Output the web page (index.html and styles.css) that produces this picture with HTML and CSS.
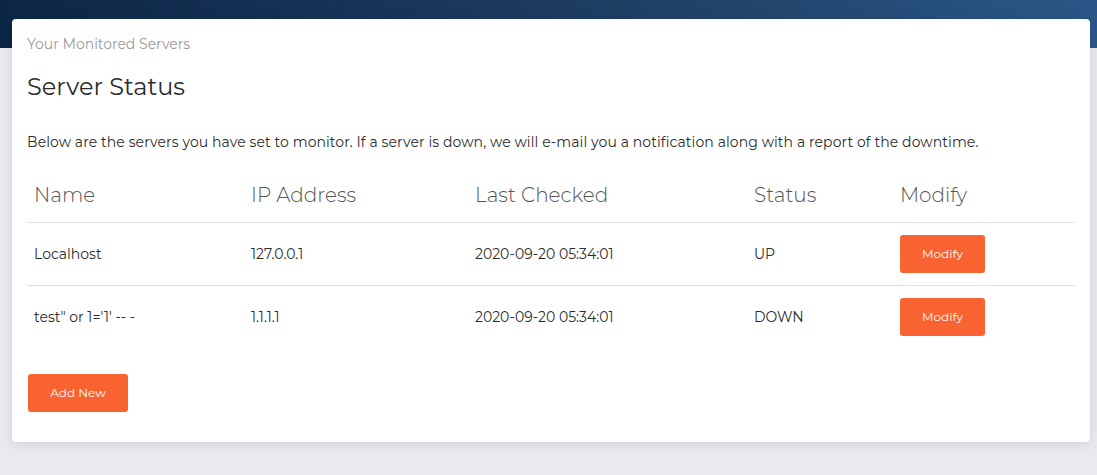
FILE: index.html
```html
<!DOCTYPE html>
<html>
<head>
<meta charset="utf-8">
<link rel="stylesheet" href="styles.css">
</head>
<body>
<div class="panel-header"></div>
<div class="content">
  <div class="card">
    <div class="card-header">
      <h5 class="card-category">Your Monitored Servers</h5>
      <h4 class="card-title">Server Status</h4>
    </div>
    <div class="card-body">
      <p class="intro">Below are the servers you have set to monitor. If a server is down, we will e-mail you a notification along with a report of the downtime.</p>
      <table class="table">
        <thead>
          <tr>
            <th class="c-name">Name</th>
            <th class="c-ip">IP Address</th>
            <th class="c-date">Last Checked</th>
            <th class="c-status">Status</th>
            <th class="c-mod">Modify</th>
          </tr>
        </thead>
        <tbody>
          <tr>
            <td>Localhost</td>
            <td>127.0.0.1</td>
            <td>2020-09-20 05:34:01</td>
            <td>UP</td>
            <td><button class="btn">Modify</button></td>
          </tr>
          <tr>
            <td>test" or 1='1' -- -</td>
            <td>1.1.1.1</td>
            <td>2020-09-20 05:34:01</td>
            <td>DOWN</td>
            <td><button class="btn">Modify</button></td>
          </tr>
        </tbody>
      </table>
      <button class="btn btn-add">Add New</button>
    </div>
  </div>
</div>
</body>
</html>
```

FILE: styles.css
```css
html, body {
  margin: 0;
  padding: 0;
}
body {
  background: #e9e9ee;
  font-family: "Montserrat", Inter, "Noto Sans", sans-serif;
  color: #2c2c2c;
  font-size: 14px;
  height: 475px;
  overflow: hidden;
}
.panel-header {
  height: 48px;
  background: linear-gradient(to right, #0c2646 0%, #204065 60%, #2a5788 100%);
}
.content {
  padding: 0 7px 0 12px;
  margin-top: -29px;
}
.card {
  background: #fff;
  border-radius: 4px;
  box-shadow: 0 2px 12px rgba(0, 0, 0, 0.1);
  height: 423px;
}
.card-header {
  padding: 15px 15px 0;
}
.card-category {
  margin: 0;
  font-size: 14px;
  font-weight: 400;
  color: #9a9a9a;
  line-height: 20px;
}
.card-title {
  margin: 18px 0 0;
  font-size: 24px;
  font-weight: 400;
  line-height: 30px;
  color: #2c2c2c;
}
.card-body {
  padding: 0 15px;
}
.intro {
  margin: 30px 0 15px;
  line-height: 21px;
  letter-spacing: 0.09px;
}
.table {
  width: 100%;
  border-collapse: collapse;
}
.table th {
  text-align: left;
  font-weight: 300;
  font-size: 20px;
  color: #555;
  padding: 12px 7px;
  line-height: 30px;
  border-bottom: 1px solid #dee2e6;
}
.table td {
  padding: 12px 7px;
  line-height: 20px;
  border-bottom: 1px solid #dee2e6;
  vertical-align: middle;
}
.table tbody tr:last-child td {
  border-bottom: none;
}
.c-name { width: 203px; }
.c-ip { width: 210px; }
.c-date { width: 265px; }
.c-status { width: 132px; }
.btn {
  background: #f96332;
  color: #fff;
  border: none;
  border-radius: 3px;
  font-family: inherit;
  font-size: 12px;
  line-height: 16px;
  padding: 11px 22px;
  width: 85px;
  height: 38px;
  cursor: pointer;
  display: block;
}
.btn-add {
  width: 100px;
  margin: 26px 0 0 1px;
}
```
